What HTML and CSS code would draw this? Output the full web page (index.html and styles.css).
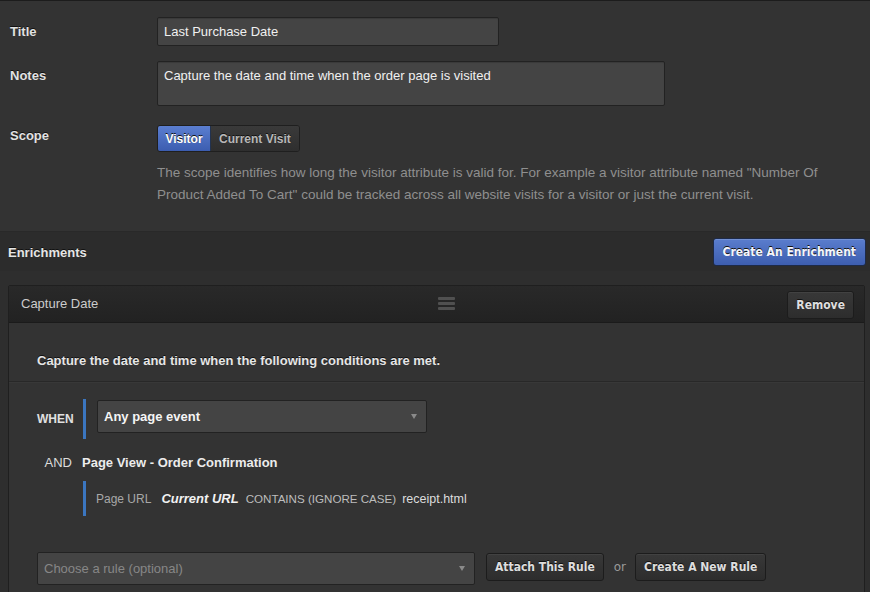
FILE: index.html
```html
<!DOCTYPE html>
<html>
<head>
<meta charset="utf-8">
<link rel="stylesheet" href="styles.css">
</head>
<body>
<section class="settings">
  <div class="row row-title">
    <label class="label">Title</label>
    <div class="control"><div class="input">Last Purchase Date</div></div>
  </div>
  <div class="row row-notes">
    <label class="label">Notes</label>
    <div class="control"><div class="textarea">Capture the date and time when the order page is visited</div></div>
  </div>
  <div class="row row-scope">
    <label class="label label-scope">Scope</label>
    <div class="control">
      <div class="btn-group">
        <span class="seg seg-active">Visitor</span><span class="seg">Current Visit</span>
      </div>
      <p class="help">The scope identifies how long the visitor attribute is valid for. For example a visitor attribute named "Number Of Product Added To Cart" could be tracked across all website visits for a visitor or just the current visit.</p>
    </div>
  </div>
</section>

<header class="enrich-bar">
  <h2 class="enrich-title">Enrichments</h2>
  <button class="btn btn-primary">Create An Enrichment</button>
</header>

<div class="enrich-list">
  <div class="card">
    <div class="card-head">
      <span class="card-name">Capture Date</span>
      <span class="handle"><i></i><i></i><i></i></span>
      <button class="btn">Remove</button>
    </div>
    <div class="card-intro">Capture the date and time when the following conditions are met.</div>
    <div class="card-body">
      <div class="when-row">
        <span class="when-label">WHEN</span>
        <div class="bar-block">
          <div class="select select-strong">Any page event<span class="caret"></span></div>
        </div>
      </div>
      <div class="and-row">
        <span class="and-label">AND</span>
        <span class="and-name">Page View - Order Confirmation</span>
      </div>
      <div class="cond">
        <span class="c-field">Page URL</span>
        <span class="c-value">Current URL</span>
        <span class="c-op">CONTAINS (IGNORE CASE)</span>
        <span class="c-text">receipt.html</span>
      </div>
      <div class="rule-row">
        <div class="select select-rule">Choose a rule (optional)<span class="caret"></span></div>
        <button class="btn">Attach This Rule</button>
        <span class="or">or</span>
        <button class="btn">Create A New Rule</button>
      </div>
    </div>
  </div>
</div>
</body>
</html>
```

FILE: styles.css
```css
* { box-sizing: border-box; }
html, body { margin: 0; padding: 0; }
body {
  background: #2e2e2e;
  font-family: "Liberation Sans", Arial, sans-serif;
  font-size: 13px;
  color: #dddddd;
  width: 870px;
  overflow: hidden;
}

.settings {
  background: #333333;
  border-top: 1px solid #1c1c1c;
  padding: 16px 0 25px 0;
}
.row { display: flex; align-items: flex-start; }
.row-notes { margin-top: 15px; }
.row-scope { margin-top: 19px; }
.label {
  width: 157px;
  flex: none;
  padding-left: 10px;
  padding-top: 7px;
  font-weight: bold;
  line-height: 16px;
  color: #e2e2e2;
  text-shadow: 0 -1px 0 #111;
}
.label-scope { padding-top: 3px; }
.control { flex: 1; }

.input, .textarea {
  background: #444444;
  border: 1px solid #222222;
  border-radius: 2px;
  color: #f0f0f0;
  padding: 0 6px;
  box-shadow: inset 0 1px 1px rgba(0,0,0,0.15);
}
.input { width: 342px; height: 29px; line-height: 28px; }
.textarea { width: 508px; height: 45px; line-height: 16px; padding-top: 6px; }

.btn-group {
  display: inline-flex;
  border: 1px solid #1f1f1f;
  border-radius: 3px;
  overflow: hidden;
  height: 27px;
}
.seg {
  display: flex;
  align-items: center;
  padding: 0 8px;
  font-size: 12px;
  font-weight: bold;
  color: #b8b8b8;
  background: linear-gradient(#3a3a3a, #2e2e2e);
  text-shadow: 0 -1px 0 #111;
}
.seg-active {
  width: 53px;
  justify-content: center;
  color: #ffffff;
  background: linear-gradient(#5b7ed0, #3c5db0);
  border-right: 1px solid #22324f;
}
.help {
  margin: 10px 0 0 0;
  max-width: 680px;
  line-height: 22px;
  color: #8f8f8f;
  font-size: 13.5px;
}

.enrich-bar {
  display: flex;
  align-items: center;
  justify-content: space-between;
  height: 40px;
  background: #2c2c2c;
  border-top: 1px solid #292929;
  padding: 1px 4px 0 8px;
}
.enrich-title {
  margin: 0;
  font-size: 13px;
  font-weight: bold;
  color: #e6e6e6;
  text-shadow: 0 -1px 0 #111;
}

.btn {
  height: 28px;
  padding: 0 8px;
  border: 1px solid #1c1c1c;
  border-radius: 3px;
  background: linear-gradient(#383838, #2d2d2d);
  color: #dedede;
  font-family: "DejaVu Sans Condensed", "DejaVu Sans", sans-serif;
  font-stretch: condensed;
  font-size: 12px;
  font-weight: bold;
  text-shadow: 0 -1px 0 #111;
  box-shadow: inset 0 1px 0 rgba(255,255,255,0.05);
  cursor: pointer;
}
.btn-primary {
  padding: 0 9px;
  background: linear-gradient(#5a7dcd, #3d5eb0);
  border-color: #1d2a48;
  color: #f4f6fb;
  box-shadow: inset 0 1px 0 rgba(255,255,255,0.15);
}

.enrich-list { padding: 14px 5px 0 8px; }
.card {
  border: 1px solid #1f1f1f;
  border-radius: 2px;
  background: #333333;
  height: 320px;
}
.card-head {
  display: flex;
  align-items: center;
  justify-content: space-between;
  height: 37px;
  padding: 1px 10px 0 12px;
  background: linear-gradient(#292929, #222222);
  border-bottom: 1px solid #1b1b1b;
}
.card-name { width: 200px; color: #cccccc; font-size: 13px; margin-top: -2px; }
.handle {
  display: flex;
  flex-direction: column;
  gap: 2px;
  width: 17px;
  margin-left: 21px;
  margin-right: 137px;
  margin-top: -2px;
}
.handle i { display: block; height: 3px; background: #505050; border-radius: 1px; }

.card-intro {
  padding: 30px 28px 12px 28px;
  line-height: 16px;
  font-weight: bold;
  color: #e6e6e6;
  border-bottom: 1px solid #282828;
  box-shadow: 0 1px 0 #383838;
  text-shadow: 0 -1px 0 #111;
}
.card-body { padding: 17px 28px 0 28px; }

.when-row { display: flex; align-items: center; }
.when-label {
  width: 46px;
  font-size: 12px;
  font-weight: bold;
  color: #e0e0e0;
}
.bar-block {
  height: 40px;
  border-left: 3px solid #3b76c0;
  padding: 1px 0 0 11px;
}
.select {
  position: relative;
  height: 33px;
  line-height: 32px;
  background: #444444;
  border: 1px solid #222222;
  border-radius: 2px;
  padding: 0 6px;
}
.select-strong { width: 330px; font-weight: bold; color: #f5f5f5; }
.caret {
  position: absolute;
  right: 9px;
  top: 13px;
  width: 0;
  height: 0;
  border-left: 3.5px solid transparent;
  border-right: 3.5px solid transparent;
  border-top: 5px solid #8a8a8a;
}

.and-row { display: flex; align-items: center; margin-top: 16px; line-height: 16px; }
.and-label { width: 35px; text-align: right; color: #dcdcdc; margin-right: 10px; }
.and-name { font-weight: bold; color: #ececec; }

.cond {
  display: flex;
  align-items: center;
  margin: 10px 0 0 46px;
  height: 35px;
  border-left: 3px solid #3b76c0;
  padding-left: 10px;
}
.c-field { font-size: 12px; color: #a8a8a8; margin-right: 10px; }
.c-value { font-weight: bold; font-style: italic; color: #f2f2f2; margin-right: 7px; }
.c-op { font-size: 11.6px; color: #bdbdbd; margin-right: 6px; }
.c-text { font-size: 12.5px; color: #dddddd; }

.rule-row { display: flex; align-items: flex-start; margin-top: 36px; }
.rule-row .btn { margin-top: 1px; }
.select-rule { width: 438px; color: #878787; margin-right: 11px; }
.or { color: #9a9a9a; margin: 0 9px 0 10px; line-height: 30px; font-family: "DejaVu Sans", sans-serif; font-size: 12px; }
```
